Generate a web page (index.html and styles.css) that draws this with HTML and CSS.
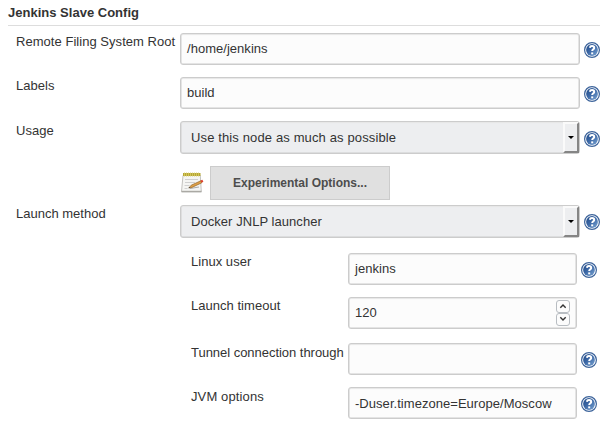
FILE: index.html
```html
<!DOCTYPE html>
<html lang="en">
<head>
<meta charset="utf-8">
<title>Jenkins Slave Config</title>
<link rel="stylesheet" href="styles.css">
</head>
<body>
<svg class="defs" width="0" height="0" aria-hidden="true">
  <defs>
    <linearGradient id="blue" x1="0" y1="0" x2="1" y2="1"><stop offset="0" stop-color="#204a87"/><stop offset=".45" stop-color="#3b67a5"/><stop offset="1" stop-color="#7ba5d3"/></linearGradient>
    <symbol id="help" viewBox="0 0 16 16">
      <circle cx="8" cy="8" r="7.4" fill="#fff" stroke="#3d649b" stroke-width="1.2"/>
      <circle cx="8" cy="8" r="5.9" fill="url(#blue)"/>
      <path d="M5.8 5.7C6 4.7 6.8 4.1 8 4.1c1.3 0 2.2.7 2.2 1.8 0 1.4-2 1.5-2 3.1" fill="none" stroke="#fff" stroke-width="2"/>
      <path d="M7.2 10.4h2v1.9h-2z" fill="#fff"/>
    </symbol>
  </defs>
</svg>
<main class="config">
  <h1 class="title">Jenkins Slave Config</h1>
  <div class="row"><label class="name root">Remote Filing System Root</label><div class="field path">/home/jenkins</div><svg class="help"><use href="#help"/></svg></div>
  <div class="row"><label class="name">Labels</label><div class="field">build</div><svg class="help"><use href="#help"/></svg></div>
  <div class="row tall"><label class="name usage">Usage</label><div class="field select"><span class="use">Use this node as much as possible</span><i class="drop"></i></div><svg class="help"><use href="#help"/></svg></div>
  <div class="options">
    <svg class="notepad" viewBox="0 0 24 24">
      <path d="M3 4.5h17.3l1 16H1.5z" fill="#f5f5f3" stroke="#b5b4b0" stroke-width=".8"/>
      <path d="M1.5 19.8h20v1.6h-20z" fill="#aaa9a4"/>
      <path d="M3 2h17.5v3H3z" fill="#b5a633"/>
      <path d="M4.5 1.5v4m2-4v4m2-4v4m2-4v4m2-4v4m2-4v4m2-4v4m2-4v4" stroke="#d9cc65" stroke-width=".8"/>
      <path d="M5 8.5h13M5 11.5h10M4.5 14.5h5M4.5 17.5h3" stroke="#d0d0d0"/>
      <path d="M10 17.5l9-1.5" stroke="#aaa" stroke-width="1"/>
      <path d="M9 16.8l2.2-2.6 9.6-4.4 1 2-9.8 4.6z" fill="#dfa047" stroke="#94652a" stroke-width=".7"/>
      <path d="M20.4 9.5l2-.8 1 2.1-1.8 1z" fill="#dc4130"/>
      <path d="M8.3 17.3l1-1.4.8 1.1z" fill="#333"/>
    </svg>
    <button class="experimental">Experimental Options...</button>
  </div>
  <div class="row tall launch"><label class="name method">Launch method</label><div class="field select"><span class="docker">Docker JNLP launcher</span><i class="drop"></i></div><svg class="help"><use href="#help"/></svg></div>
  <section class="nested">
    <div class="row"><label class="name">Linux user</label><div class="field">jenkins</div><svg class="help"><use href="#help"/></svg></div>
    <div class="row timeout"><label class="name">Launch timeout</label><div class="field">120<span class="spin"><svg viewBox="0 0 12 11"><path d="M3.3 6.7L6 4l2.7 2.7"/></svg><svg viewBox="0 0 12 11"><path d="M3.3 3.3L6 6l2.7-2.7"/></svg></span></div></div>
    <div class="row"><label class="name tunnel">Tunnel connection through</label><div class="field"></div><svg class="help"><use href="#help"/></svg></div>
    <div class="row"><label class="name jvm">JVM options</label><div class="field java">-Duser.timezone=Europe/Moscow</div><svg class="help"><use href="#help"/></svg></div>
  </section>
</main>
</body>
</html>
```
FILE: styles.css
```css
* { box-sizing: border-box; }
body { margin: 0; background: #fff; color: #333; font: 13px/18px "Liberation Sans", Arial, sans-serif; }
.defs { display: block; }
.config { width: 592px; margin-left: 8px; padding-top: 4px; }
.title { height: 22px; margin: 0 0 7px; border-bottom: 1px solid #ddd; font-size: 13px; line-height: 18px; letter-spacing: .01px; }
.row { display: flex; height: 32px; margin-bottom: 12px; }
.name { width: 164px; margin-left: 8px; white-space: nowrap; letter-spacing: .03px; }
.root { letter-spacing: .04px; }
.method { letter-spacing: 0; }
.field { width: 400px; display: flex; align-items: center; padding: 0 6px; background: #fcfcfc; border: 1px solid #ccc; border-radius: 3px; box-shadow: inset 0 1px 1px #e8e8e8, inset 0 0 0 .5px #ccc; letter-spacing: .03px; white-space: nowrap; }
.help { width: 16px; height: 16px; margin: 9px 0 0 4px; flex: none; }
.tall { height: 33px; }
.tall .help { margin-top: 10px; }
.usage { padding-top: 1px; }
.select { background: #edeef0; padding: 0 0 0 10px; }
.use { letter-spacing: .13px; }
.docker { letter-spacing: .05px; }
.drop { width: 16px; height: 31px; margin-left: auto; background: #edeef0; border: 2px solid; border-color: #fafafa #858585 #858585 #fafafa; display: flex; align-items: center; justify-content: center; }
.drop::before { content: ""; border: 3px solid transparent; border-top-color: #000; border-bottom: 0; }
.options { display: flex; height: 34px; margin: 0 0 5px 172px; }
.notepad { width: 24px; height: 24px; margin: 5px 6px 0 0; }
.experimental { width: 180px; height: 34px; padding: 0; border: 1px solid #ccc; background: #e0e0e0; color: #4d4d4d; font: bold 12px/18px "Liberation Sans", Arial, sans-serif; }
.launch { margin-bottom: 15px; }
.launch .help { margin-top: 9px; }
.nested { width: 414px; margin-left: 175px; }
.nested .name { width: 157px; }
.nested .field { width: 229px; }
.nested .timeout { margin-bottom: 14px; }
.nested .tunnel, .nested .jvm { padding-top: 1px; }
.nested .tunnel { letter-spacing: -.03px; }
.nested .jvm { letter-spacing: .12px; }
.java { padding-top: 2px; letter-spacing: .04px; }
.spin { margin-left: auto; display: flex; flex-direction: column; }
.spin svg { width: 14px; height: 13px; background: #fcfcfc; border: 1px solid #b8bdc2; border-radius: 3px; }
.spin path { fill: none; stroke: #333; stroke-width: 1.4; }
```
